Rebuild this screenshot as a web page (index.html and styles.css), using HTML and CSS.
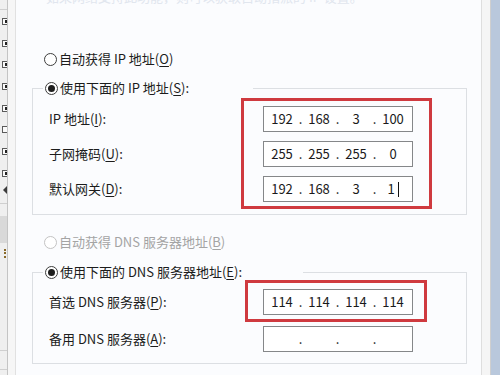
FILE: index.html
```html
<!DOCTYPE html>
<html lang="zh-CN">
<head>
<meta charset="utf-8">
<title>IPv4 属性</title>
<link rel="stylesheet" href="styles.css">
</head>
<body>
<div class="screen">
  <aside class="tree">
    <div class="tree-head"></div>
    <ul class="nodes">
      <li class="node"><i></i></li>
      <li class="node"><i></i></li>
      <li class="node"><i></i></li>
      <li class="node"><i></i></li>
      <li class="node"><i></i></li>
      <li class="node empty"></li>
      <li class="node"><i></i></li>
      <li class="node"><i></i></li>
    </ul>
    <div class="arrow"></div>
    <div class="tree-line"></div>
    <div class="tree-sel"></div>
    <div class="tree-ico"></div>
    <div class="tree-line low"></div>
    <div class="tree-line last"></div>
  </aside>
  <div class="gutter"></div>
  <main class="dialog">
    <p class="faint">如果网络支持此功能，则可以获取自动指派的 IP 设置。</p>

    <div class="radio top-radio"><span class="circle"></span>自动获得 IP 地址(<u>O</u>)</div>

    <fieldset class="group g-ip">
      <legend class="legend-ip"><span class="radio"><span class="circle on"></span>使用下面的 IP 地址(<u>S</u>):</span></legend>
      <div class="grid grid-ip">
        <div class="labels">
          <div class="lbl">IP 地址(<u>I</u>):</div>
          <div class="lbl">子网掩码(<u>U</u>):</div>
          <div class="lbl">默认网关(<u>D</u>):</div>
        </div>
        <div class="mark mark-ip">
          <div class="ipbox"><span class="f">192</span><span class="d">.</span><span class="f">168</span><span class="d">.</span><span class="f">3</span><span class="d">.</span><span class="f">100</span></div>
          <div class="ipbox"><span class="f">255</span><span class="d">.</span><span class="f">255</span><span class="d">.</span><span class="f">255</span><span class="d">.</span><span class="f">0</span></div>
          <div class="ipbox"><span class="f">192</span><span class="d">.</span><span class="f">168</span><span class="d">.</span><span class="f">3</span><span class="d">.</span><span class="f typing">1<span class="caret"></span></span></div>
        </div>
      </div>
    </fieldset>

    <div class="radio disabled mid-radio"><span class="circle"></span>自动获得 DNS 服务器地址(<u>B</u>)</div>

    <fieldset class="group g-dns">
      <legend class="legend-dns"><span class="radio"><span class="circle on"></span>使用下面的 DNS 服务器地址(<u>E</u>):</span></legend>
      <div class="grid grid-dns">
        <div class="labels labels-dns">
          <div class="lbl">首选 DNS 服务器(<u>P</u>):</div>
          <div class="lbl">备用 DNS 服务器(<u>A</u>):</div>
        </div>
        <div class="col-dns">
          <div class="mark mark-dns">
            <div class="ipbox"><span class="f">114</span><span class="d">.</span><span class="f">114</span><span class="d">.</span><span class="f">114</span><span class="d">.</span><span class="f">114</span></div>
          </div>
          <div class="ipbox alt"><span class="f"></span><span class="d">.</span><span class="f"></span><span class="d">.</span><span class="f"></span><span class="d">.</span><span class="f"></span></div>
        </div>
      </div>
    </fieldset>
  </main>
  <div class="edge"></div>
  <div class="frame"></div>
</div>
</body>
</html>
```
FILE: styles.css
```css
* { box-sizing: border-box; }
html, body { margin: 0; padding: 0; background: #fbfcfe; }
body {
  font-family: "Noto Sans CJK SC", "Noto Sans", sans-serif;
  font-size: 13px;
  color: #1c1c1c;
}
u { text-decoration: underline; text-underline-offset: 2px; text-decoration-thickness: 1px; }

.screen {
  display: flex;
  width: 500px;
  height: 375px;
  overflow: hidden;
}

/* left tree pane (clipped) */
.tree {
  width: 8px;
  flex: none;
  background: #efefef;
  border-right: 1px solid #c4c4c4;
  display: flex;
  flex-direction: column;
}
.tree-head { height: 10px; border-bottom: 1px solid #cfcfcf; flex: none; }
.nodes {
  list-style: none;
  margin: 8px 0 0;
  padding: 0;
  display: flex;
  flex-direction: column;
  gap: 14.7px;
}
.node {
  width: 5px;
  height: 7px;
  margin-left: 2px;
  border: 1px solid #5a5a5a;
  border-right: none;
  display: flex;
  align-items: center;
  justify-content: flex-end;
  background: #fafafa;
}
.node i { display: block; width: 2px; height: 3px; background: #222; }
.arrow {
  margin: 9px 0 0 3px;
  width: 0; height: 0;
  border-top: 4px solid transparent;
  border-bottom: 4px solid transparent;
  border-right: 4px solid #3a3a3a;
}
.tree-line { height: 1px; background: #cfcfcf; margin-top: 9px; }
.tree-sel { height: 27px; background: #d9d9d9; margin-top: 12px; }
.tree-ico {
  width: 3px; height: 9px; margin: 6px 0 0 4px;
  border-left: 2px dotted #8a6a2a;
}
.tree-line.low { margin-top: 92px; }
.tree-line.last { margin-top: 18px; }

.gutter {
  width: 8px;
  flex: none;
  background: #f6f6f6;
  border-right: 1px solid #e1e1e1;
}

/* dialog body */
.dialog {
  flex: 1;
  min-width: 0;
  padding-left: 16px;
  background: #fbfcfe;
}
.faint {
  margin: -10px 0 0;
  height: 14px;
  line-height: 14px;
  color: #e1e6ee;
  white-space: nowrap;
  overflow: hidden;
  padding-left: 14px;
}

.radio {
  display: flex;
  align-items: center;
  height: 18px;
  line-height: 18px;
  white-space: nowrap;
}
.circle {
  width: 13px;
  height: 13px;
  border-radius: 50%;
  border: 1px solid #3d3d3d;
  background: #fff;
  margin-right: 2px;
  flex: none;
  display: flex;
  align-items: center;
  justify-content: center;
}
.circle.on::after {
  content: "";
  width: 7px;
  height: 7px;
  border-radius: 50%;
  background: #1e1e1e;
}
.radio.disabled { color: #a4a4a4; }
.radio.disabled .circle { border-color: #c3c3c3; }

.top-radio { margin-top: 46px; padding-left: 12px; }
.mid-radio { margin-top: 18px; padding-left: 12px; }

.group {
  width: 435px;
  margin: 0;
  border: 1px solid #dcdfe3;
  padding: 0 16px;
}
.g-ip { margin-top: 11px; padding-bottom: 5px; }
.g-dns { margin-top: 12px; padding-bottom: 11px; }
.group legend {
  padding: 0 0 0 2px;
  margin-left: -6px;
}
.legend-ip { width: 210px; }
.legend-dns { width: 260px; }

.grid { display: grid; }
.grid-ip { grid-template-columns: 192px auto; margin-top: 1px; }
.grid-dns { grid-template-columns: 196px auto; margin-top: -1px; }

.labels {
  display: flex;
  flex-direction: column;
  gap: 9px;
  padding-top: 8px;
}
.labels-dns { gap: 11px; padding-top: 9px; }
.lbl { height: 26px; line-height: 26px; white-space: nowrap; }

.mark {
  border: 3px solid #cf3a3f;
  display: flex;
  flex-direction: column;
  gap: 9px;
  justify-self: start;
}
.mark-ip { padding: 5px 16px 4px 19px; }
.mark-dns { padding: 6px 11px 4px 15px; }
.col-dns { display: flex; flex-direction: column; align-items: flex-start; }

.ipbox {
  width: 150px;
  height: 26px;
  border: 1px solid #858789;
  background: #fff;
  display: flex;
  align-items: center;
  padding-left: 4px;
  line-height: 20px;
  color: #1a1a1a;
}
.ipbox.alt { margin: 4px 0 0 18px; }
.f { width: 28px; text-align: center; white-space: nowrap; }
.d { width: 9px; text-align: center; }
.caret {
  display: inline-block;
  width: 1px;
  height: 15px;
  background: #111;
  margin-left: 3px;
  vertical-align: -3px;
}

.edge {
  width: 10px;
  flex: none;
  background: #f5f5f5;
  border-left: 1px solid #dedede;
  border-right: 1px solid #cfcfcf;
}
.frame {
  width: 9px;
  flex: none;
  background: #b9c8dc;
}
```
